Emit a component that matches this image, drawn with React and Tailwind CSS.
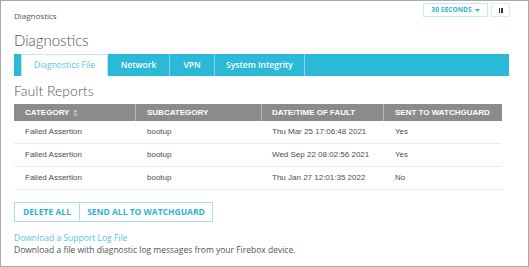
import React from 'react';

const rows = [
  { category: 'Failed Assertion', sub: 'bootup', date: 'Thu Mar 25 17:06:48 2021', sent: 'Yes' },
  { category: 'Failed Assertion', sub: 'bootup', date: 'Wed Sep 22 08:02:56 2021', sent: 'Yes' },
  { category: 'Failed Assertion', sub: 'bootup', date: 'Thu Jan 27 12:01:35 2022', sent: 'No' },
];

const tabs = [
  { label: 'Network', w: 'w-[62px]' },
  { label: 'VPN', w: 'w-[45px]' },
  { label: 'System Integrity', w: 'w-[90px]' },
];

const SortIcon = () => (
  <svg width="5" height="8" viewBox="0 0 5 8" className="ml-[4px]">
    <path d="M2.5 0.5 L4.8 3.2 H0.2 Z" fill="#c9c9c9" />
    <path d="M2.5 7.5 L4.8 4.8 H0.2 Z" fill="#c9c9c9" />
  </svg>
);

export default function App() {
  return (
    <div
      className="w-[529px] h-[267px] box-border border border-[#a9a9a9] bg-white pl-[13px] pr-[18px] text-[#555]"
      style={{ fontFamily: '"Open Sans", sans-serif' }}
    >
      {/* Top row */}
      <div className="h-[29px] flex justify-between items-start">
        <div className="pt-[9px] text-[8px] leading-[12px] text-[#555]">Diagnostics</div>
        <div className="flex gap-[3px] mt-[2px]">
          <button className="h-[14px] w-[65px] box-border border border-[#c5e9f2] flex items-center justify-center gap-[3px] text-[6.5px] font-bold text-[#2fb2d1] tracking-[0.1px]">
            30 SECONDS
            <svg width="5" height="3" viewBox="0 0 5 3">
              <path d="M0 0 H5 L2.5 3 Z" fill="#2fb2d1" />
            </svg>
          </button>
          <button className="h-[14px] w-[19px] box-border border border-[#d6eef4] flex items-center justify-center gap-[1px]">
            <span className="block w-[1.5px] h-[5px] bg-[#333]" />
            <span className="block w-[1.5px] h-[5px] bg-[#333]" />
          </button>
        </div>
      </div>

      {/* Title */}
      <div className="text-[15px] leading-[20px] font-light text-[#555]" style={{ fontFamily: 'Lato, sans-serif' }}>
        Diagnostics
      </div>

      {/* Tabs */}
      <div className="mt-[4px] h-[22px] w-[495px] bg-[#2ab9d6] flex">
        <div className="w-[7px]" />
        <div className="w-[87px] h-full bg-white border-t border-x border-[#bfe9f3] flex items-center justify-center text-[8.5px] text-[#5cc3dc]">
          Diagnostics File
        </div>
        {tabs.map((t) => (
          <div
            key={t.label}
            className={`${t.w} h-full border-r border-[#8ad6e8] flex items-center justify-center text-[8.5px] font-semibold text-white`}
          >
            {t.label}
          </div>
        ))}
      </div>

      {/* Fault Reports */}
      <div className="mt-[6px] text-[14px] leading-[18px] font-light text-[#555]" style={{ fontFamily: 'Lato, sans-serif' }}>
        Fault Reports
      </div>

      {/* Table */}
      <div className="mt-[4px] w-[488px]" style={{ fontFamily: '"Liberation Sans", Arial, sans-serif' }}>
        <div className="grid grid-cols-[122px_126px_122px_118px] h-[17px] bg-[#8b8b8b] text-white text-[8px] font-bold">
          <div className="flex items-center pl-[11px] border-r border-[#b5b5b5]">
            CATEGORY
            <SortIcon />
          </div>
          <div className="flex items-center pl-[11px] border-r border-[#b5b5b5]">SUBCATEGORY</div>
          <div className="flex items-center pl-[10px] border-r border-[#b5b5b5]">DATE/TIME OF FAULT</div>
          <div className="flex items-center pl-[11px]">SENT TO WATCHGUARD</div>
        </div>
        {rows.map((r, i) => (
          <div
            key={i}
            className="grid grid-cols-[122px_126px_122px_118px] h-[23px] border-b border-[#ececec] text-[8px] text-[#4d4d4d]"
          >
            <div className="flex items-center pl-[11px]">{r.category}</div>
            <div className="flex items-center pl-[11px]">{r.sub}</div>
            <div className="flex items-center pl-[10px]">{r.date}</div>
            <div className="flex items-center pl-[11px]">{r.sent}</div>
          </div>
        ))}
      </div>

      {/* Action buttons */}
      <div className="mt-[12px] flex h-[20px] w-[199px] box-border border border-[#a8e0ed]">
        <button className="w-[65px] h-full border-r border-[#a8e0ed] flex items-center justify-center text-[8.5px] font-bold text-[#2fb2d1]">
          DELETE ALL
        </button>
        <button className="flex-1 h-full flex items-center justify-center text-[8.5px] font-bold text-[#2fb2d1]">
          SEND ALL TO WATCHGUARD
        </button>
      </div>

      {/* Support log */}
      <div className="mt-[10px] text-[8.5px] leading-[12px] text-[#5cc3dc]">Download a Support Log File</div>
      <div className="text-[8.5px] leading-[12px] text-[#555]">
        Download a file with diagnostic log messages from your Firebox device.
      </div>
    </div>
  );
}
